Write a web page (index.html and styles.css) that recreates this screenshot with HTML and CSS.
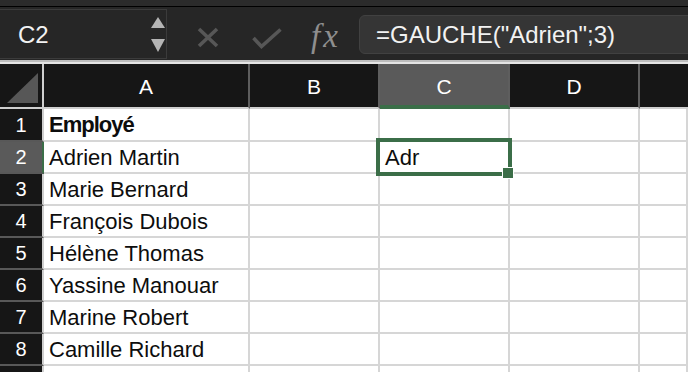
FILE: index.html
```html
<!DOCTYPE html>
<html lang="fr">
<head>
    <meta charset="UTF-8">
    <title>Classeur</title>
    <link rel="stylesheet" href="styles.css">
</head>
<body>
    <div class="app">
        <div class="titlestrip"></div>
        <div class="toolbar">
            <div class="namebox">
                <span class="cellref">C2</span>
                <svg class="stepper" width="14" height="35" viewBox="0 0 14 35">
                    <polygon points="7,0 14,11 0,11" fill="#b4b4b4"/>
                    <polygon points="0,22 14,22 7,35" fill="#b4b4b4"/>
                </svg>
            </div>
            <div class="actions">
                <svg class="icon-cancel" width="22" height="21" viewBox="0 0 22 21">
                    <path d="M2 2 L20 19 M20 2 L2 19" stroke="#575757" stroke-width="3.6" fill="none"/>
                </svg>
                <svg class="icon-ok" width="30" height="21" viewBox="0 0 30 21">
                    <path d="M1.5 10 L9.5 18.5 L28.5 1.5" stroke="#575757" stroke-width="3.6" fill="none"/>
                </svg>
                <span class="fx">fx</span>
            </div>
            <div class="formula">=GAUCHE("Adrien";3)</div>
        </div>
        <div class="divider"></div>
        <div class="sheet">
            <div class="corner">
                <svg width="31" height="30" viewBox="0 0 31 30"><polygon points="31,0 31,30 0,30" fill="#575757"/></svg>
            </div>
            <div class="col-hdr">A</div>
            <div class="col-hdr">B</div>
            <div class="col-hdr active">C</div>
            <div class="col-hdr">D</div>
            <div class="col-hdr last"></div>

            <div class="row-hdr">1</div>
            <div class="cell bold">Employé</div>
            <div class="cell"></div>
            <div class="cell"></div>
            <div class="cell"></div>
            <div class="cell"></div>

            <div class="row-hdr active">2</div>
            <div class="cell">Adrien Martin</div>
            <div class="cell"></div>
            <div class="cell selected">Adr<span class="selection"><span class="handle"></span></span></div>
            <div class="cell"></div>
            <div class="cell"></div>

            <div class="row-hdr">3</div>
            <div class="cell">Marie Bernard</div>
            <div class="cell"></div>
            <div class="cell"></div>
            <div class="cell"></div>
            <div class="cell"></div>

            <div class="row-hdr">4</div>
            <div class="cell">François Dubois</div>
            <div class="cell"></div>
            <div class="cell"></div>
            <div class="cell"></div>
            <div class="cell"></div>

            <div class="row-hdr">5</div>
            <div class="cell">Hélène Thomas</div>
            <div class="cell"></div>
            <div class="cell"></div>
            <div class="cell"></div>
            <div class="cell"></div>

            <div class="row-hdr">6</div>
            <div class="cell">Yassine Manouar</div>
            <div class="cell"></div>
            <div class="cell"></div>
            <div class="cell"></div>
            <div class="cell"></div>

            <div class="row-hdr">7</div>
            <div class="cell">Marine Robert</div>
            <div class="cell"></div>
            <div class="cell"></div>
            <div class="cell"></div>
            <div class="cell"></div>

            <div class="row-hdr">8</div>
            <div class="cell">Camille Richard</div>
            <div class="cell"></div>
            <div class="cell"></div>
            <div class="cell"></div>
            <div class="cell"></div>

            <div class="row-hdr"></div>
            <div class="cell"></div>
            <div class="cell"></div>
            <div class="cell"></div>
            <div class="cell"></div>
            <div class="cell"></div>
        </div>
    </div>
</body>
</html>
```

FILE: styles.css
```css
body, html {
    margin: 0;
    height: 100%;
    overflow: hidden;
    background: #ffffff;
    font-family: "Liberation Sans", Arial, sans-serif;
}

.app {
    width: 688px;
    height: 372px;
    overflow: hidden;
}

.titlestrip {
    height: 6px;
    background-color: #2b2b2b;
}

.toolbar {
    display: flex;
    align-items: flex-start;
    padding-top: 2px;
    box-sizing: border-box;
    height: 54px;
    border-top: 1px solid #000000;
    background-color: #262626;
}

.namebox {
    display: flex;
    align-items: flex-start;
    width: 167px;
    height: 50px;
    box-sizing: border-box;
    border: 1px solid #3b3b3b;
    border-left: none;
}

.cellref {
    padding-left: 18px;
    margin-top: 11px;
    font-size: 24px;
    line-height: 27px;
    color: #f2f2f2;
}

.stepper {
    margin-left: auto;
    margin-right: 1px;
    margin-top: 7px;
}

.actions {
    display: flex;
    align-items: flex-start;
    width: 192px;
}

.icon-cancel {
    margin-left: 30px;
    margin-top: 18px;
}

.icon-ok {
    margin-left: 33px;
    margin-top: 19px;
}

.fx {
    margin-left: 29px;
    margin-top: 9px;
    font-family: "Liberation Serif", "Times New Roman", serif;
    font-style: italic;
    font-size: 33px;
    line-height: 36px;
    letter-spacing: 3px;
    color: #8e8e8e;
}

.formula {
    flex: 1;
    height: 39px;
    margin-top: 6px;
    margin-right: -10px;
    padding-left: 16px;
    box-sizing: border-box;
    border: 1px solid #414141;
    border-radius: 6px;
    background-color: #353535;
    font-size: 24px;
    line-height: 37px;
    color: #f2f2f2;
}

.divider {
    height: 2px;
    border-top: 2px solid #bdbdbd;
    background-color: #e4e4e4;
}

.sheet {
    display: grid;
    grid-template-columns: 44px 206px 130px 130px 130px 1fr;
    grid-template-rows: 45px 33px repeat(8, 32px);
}

.sheet > div {
    box-sizing: border-box;
}

.corner {
    display: flex;
    justify-content: flex-end;
    align-items: flex-end;
    padding: 0 4px 4px 0;
    background-color: #161616;
    border-right: 2px solid #cfcfcf;
    border-bottom: 2px solid #cfcfcf;
}

.col-hdr {
    display: flex;
    justify-content: center;
    align-items: center;
    padding-top: 3px;
    background-color: #161616;
    border-right: 2px solid #5e5e5e;
    border-bottom: 2px solid #cfcfcf;
    font-size: 21px;
    color: #ffffff;
}

.col-hdr.last {
    border-right: none;
}

.col-hdr.active {
    background-color: #5a5a5a;
    border-bottom: 4px solid #3b6e48;
    padding-top: 5px;
}

.row-hdr {
    display: flex;
    justify-content: center;
    align-items: center;
    padding-top: 1px;
    background-color: #161616;
    border-right: 2px solid #cfcfcf;
    border-bottom: 2px solid #585858;
    font-size: 20px;
    color: #ffffff;
}

.row-hdr.active {
    background-color: #5a5a5a;
    border-right-color: #3b6e48;
}

.cell {
    display: flex;
    align-items: center;
    padding: 1px 0 0 5px;
    background-color: #ffffff;
    border-right: 2px solid #d6d6d6;
    border-bottom: 2px solid #d6d6d6;
    font-size: 22px;
    color: #0d0d0d;
    white-space: nowrap;
}

.cell.bold {
    font-weight: bold;
    letter-spacing: -1px;
}

.cell.selected {
    position: relative;
}

.selection {
    position: absolute;
    left: -4px;
    top: -4px;
    right: -4px;
    bottom: -4px;
    border: 4px solid #3b6e48;
}

.handle {
    position: absolute;
    left: 122px;
    top: 25px;
    width: 10px;
    height: 10px;
    border: 1px solid #ffffff;
    background-color: #3b6e48;
}
```
